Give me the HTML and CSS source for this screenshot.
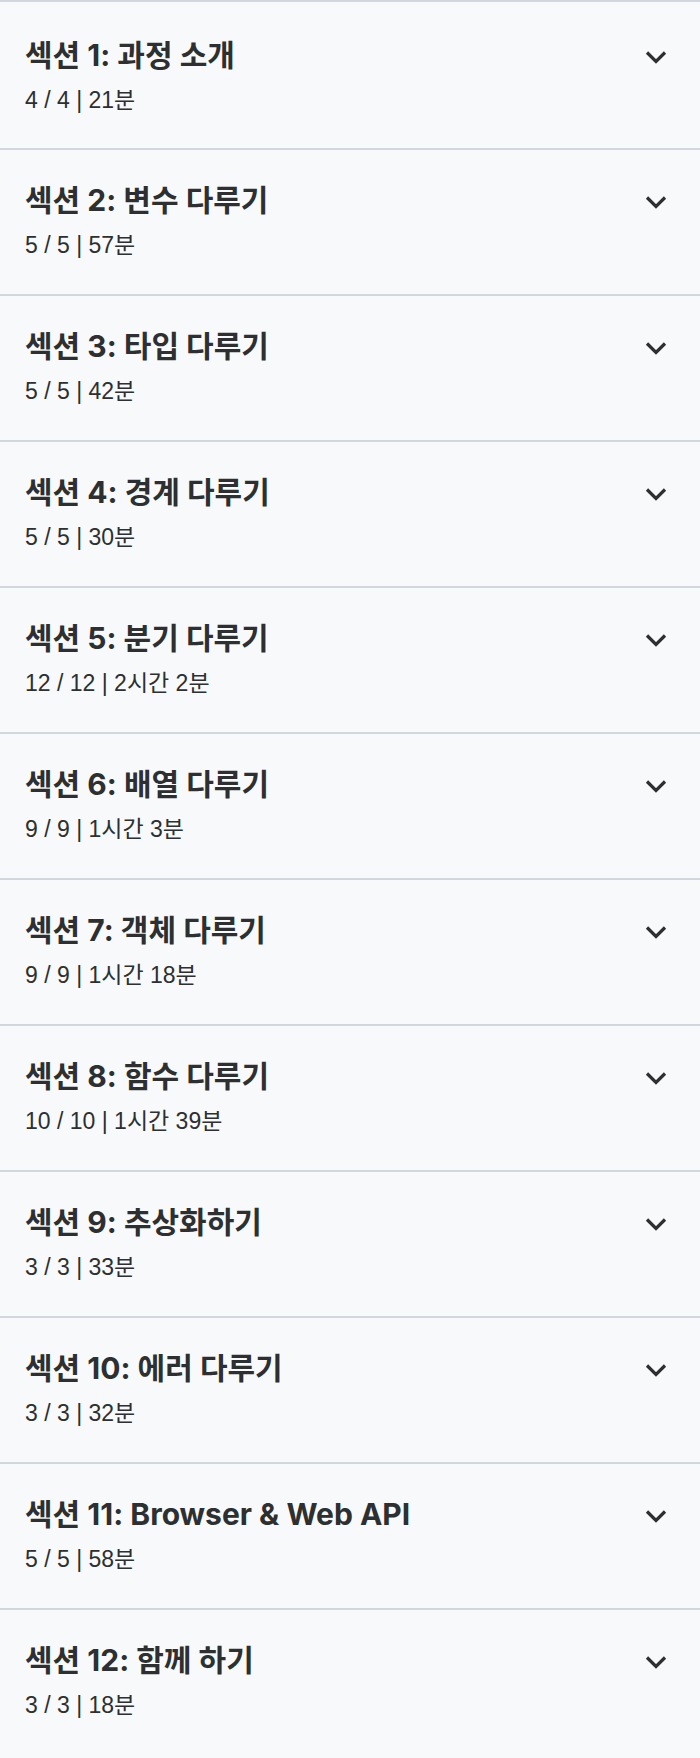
FILE: index.html
```html
<!DOCTYPE html>
<html lang="ko">
<head>
    <meta charset="UTF-8">
    <meta name="viewport" content="width=device-width, initial-scale=1.0">
    <title>커리큘럼</title>
    <link rel="stylesheet" href="styles.css">
</head>
<body>

    <div class="curriculum">
        <div class="section">
            <div class="section-info">
                <h3 class="section-title">섹션 1: 과정 소개</h3>
                <div class="section-meta">4 / 4 | 21분</div>
            </div>
            <svg class="chevron" viewBox="0 0 22 14"><polyline points="2,2.5 11,11.5 20,2.5"/></svg>
        </div>
        <div class="section">
            <div class="section-info">
                <h3 class="section-title">섹션 2: 변수 다루기</h3>
                <div class="section-meta">5 / 5 | 57분</div>
            </div>
            <svg class="chevron" viewBox="0 0 22 14"><polyline points="2,2.5 11,11.5 20,2.5"/></svg>
        </div>
        <div class="section">
            <div class="section-info">
                <h3 class="section-title">섹션 3: 타입 다루기</h3>
                <div class="section-meta">5 / 5 | 42분</div>
            </div>
            <svg class="chevron" viewBox="0 0 22 14"><polyline points="2,2.5 11,11.5 20,2.5"/></svg>
        </div>
        <div class="section">
            <div class="section-info">
                <h3 class="section-title">섹션 4: 경계 다루기</h3>
                <div class="section-meta">5 / 5 | 30분</div>
            </div>
            <svg class="chevron" viewBox="0 0 22 14"><polyline points="2,2.5 11,11.5 20,2.5"/></svg>
        </div>
        <div class="section">
            <div class="section-info">
                <h3 class="section-title">섹션 5: 분기 다루기</h3>
                <div class="section-meta">12 / 12 | 2시간 2분</div>
            </div>
            <svg class="chevron" viewBox="0 0 22 14"><polyline points="2,2.5 11,11.5 20,2.5"/></svg>
        </div>
        <div class="section">
            <div class="section-info">
                <h3 class="section-title">섹션 6: 배열 다루기</h3>
                <div class="section-meta">9 / 9 | 1시간 3분</div>
            </div>
            <svg class="chevron" viewBox="0 0 22 14"><polyline points="2,2.5 11,11.5 20,2.5"/></svg>
        </div>
        <div class="section">
            <div class="section-info">
                <h3 class="section-title">섹션 7: 객체 다루기</h3>
                <div class="section-meta">9 / 9 | 1시간 18분</div>
            </div>
            <svg class="chevron" viewBox="0 0 22 14"><polyline points="2,2.5 11,11.5 20,2.5"/></svg>
        </div>
        <div class="section">
            <div class="section-info">
                <h3 class="section-title">섹션 8: 함수 다루기</h3>
                <div class="section-meta">10 / 10 | 1시간 39분</div>
            </div>
            <svg class="chevron" viewBox="0 0 22 14"><polyline points="2,2.5 11,11.5 20,2.5"/></svg>
        </div>
        <div class="section">
            <div class="section-info">
                <h3 class="section-title">섹션 9: 추상화하기</h3>
                <div class="section-meta">3 / 3 | 33분</div>
            </div>
            <svg class="chevron" viewBox="0 0 22 14"><polyline points="2,2.5 11,11.5 20,2.5"/></svg>
        </div>
        <div class="section">
            <div class="section-info">
                <h3 class="section-title">섹션 10: 에러 다루기</h3>
                <div class="section-meta">3 / 3 | 32분</div>
            </div>
            <svg class="chevron" viewBox="0 0 22 14"><polyline points="2,2.5 11,11.5 20,2.5"/></svg>
        </div>
        <div class="section">
            <div class="section-info">
                <h3 class="section-title">섹션 11: Browser &amp; Web API</h3>
                <div class="section-meta">5 / 5 | 58분</div>
            </div>
            <svg class="chevron" viewBox="0 0 22 14"><polyline points="2,2.5 11,11.5 20,2.5"/></svg>
        </div>
        <div class="section">
            <div class="section-info">
                <h3 class="section-title">섹션 12: 함께 하기</h3>
                <div class="section-meta">3 / 3 | 18분</div>
            </div>
            <svg class="chevron" viewBox="0 0 22 14"><polyline points="2,2.5 11,11.5 20,2.5"/></svg>
        </div>
    </div>

</body>
</html>
```

FILE: styles.css
```css
* { margin: 0; padding: 0; box-sizing: border-box; }

body {
    background: #f7f9fa;
    color: #2d2f31;
    font-family: "Liberation Sans", "Noto Sans CJK KR", sans-serif;
}

/* --- SECTION LIST --- */
.section {
    display: flex;
    justify-content: space-between;
    align-items: flex-start;
    border-top: 2px solid #d1d7dc;
    padding: 32px 33px 34px 25px;
}

/* first row sits a bit lower */
.section:first-child { padding-top: 35px; padding-bottom: 33px; }

.section-title {
    font-family: Inter, "Noto Sans CJK KR", sans-serif;
    font-size: 30px;
    line-height: 36px;
    font-weight: 700;
}

.section-meta {
    margin-top: 12px;
    font-size: 23px;
    line-height: 30px;
}

.chevron {
    width: 22px;
    height: 14px;
    margin-top: 13px;
    flex-shrink: 0;
    fill: none;
    stroke: #2d2f31;
    stroke-width: 3.2;
}
```
